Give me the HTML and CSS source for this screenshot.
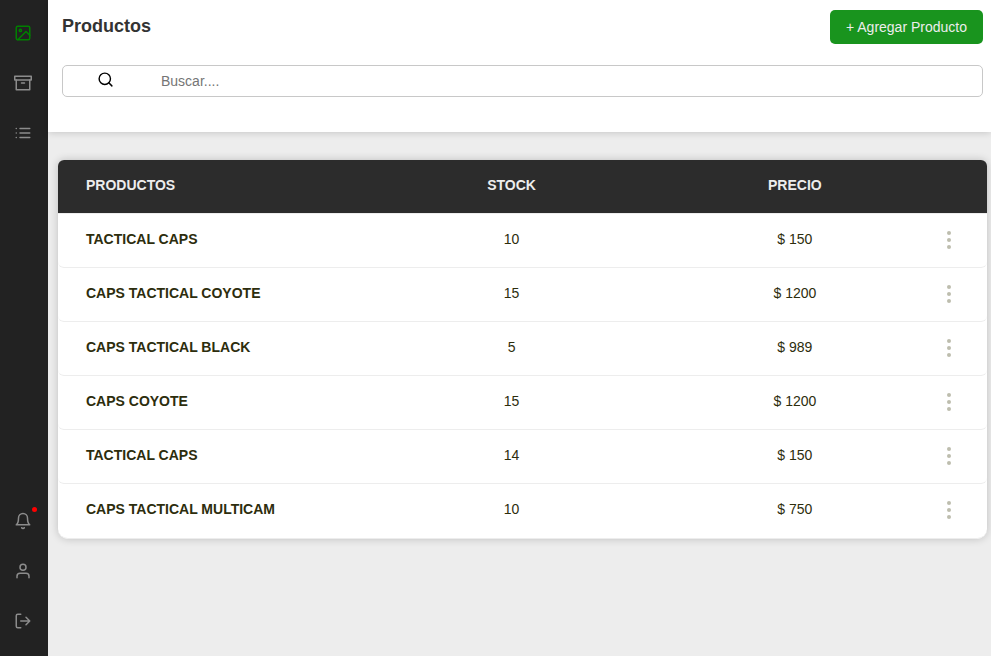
FILE: index.html
```html
<!DOCTYPE html>
<html lang="es">
<head>
<meta charset="utf-8">
<meta name="viewport" content="width=device-width, initial-scale=1">
<title>Productos</title>
<link rel="stylesheet" href="styles.css">
</head>
<body>
<div class="app">
  <nav class="sidebar" aria-label="Principal">
    <div class="nav-group">
      <a class="nav-link active" href="#productos" aria-label="Productos">
        <svg class="icon" viewBox="0 0 24 24"><rect x="3" y="3" width="18" height="18" rx="2"/><circle cx="8.5" cy="8.5" r="1.5"/><path d="M21 15l-5-5L5 21"/></svg>
      </a>
      <a class="nav-link" href="#archivo" aria-label="Archivo">
        <svg class="icon" viewBox="0 0 24 24"><path d="M21 8v13H3V8"/><rect x="1" y="3" width="22" height="5"/><path d="M10 12h4"/></svg>
      </a>
      <a class="nav-link" href="#lista" aria-label="Lista">
        <svg class="icon" viewBox="0 0 24 24"><path d="M8 6h13M8 12h13M8 18h13M3 6h.01M3 12h.01M3 18h.01"/></svg>
      </a>
    </div>
    <div class="nav-group">
      <a class="nav-link" href="#avisos" aria-label="Notificaciones">
        <svg class="icon" viewBox="0 0 24 24"><path d="M18 8A6 6 0 0 0 6 8c0 7-3 9-3 9h18s-3-2-3-9"/><path d="M13.73 21a2 2 0 0 1-3.46 0"/></svg>
        <span class="badge"></span>
      </a>
      <a class="nav-link" href="#perfil" aria-label="Perfil">
        <svg class="icon" viewBox="0 0 24 24"><path d="M20 21v-2a4 4 0 0 0-4-4H8a4 4 0 0 0-4 4v2"/><circle cx="12" cy="7" r="4"/></svg>
      </a>
      <a class="nav-link" href="#salir" aria-label="Salir">
        <svg class="icon" viewBox="0 0 24 24"><path d="M9 21H5a2 2 0 0 1-2-2V5a2 2 0 0 1 2-2h4"/><path d="M16 17l5-5-5-5M21 12H9"/></svg>
      </a>
    </div>
  </nav>
  <div class="content">
    <header class="header">
      <div class="title-row">
        <h1 class="title">Productos</h1>
        <button class="add-button" type="button">+ Agregar Producto</button>
      </div>
      <div class="search">
        <label class="search-label" for="buscar" aria-label="Buscar">
          <svg class="search-icon" viewBox="0 0 24 24"><circle cx="11" cy="11" r="8"/><path d="M21 21l-4.35-4.35"/></svg>
        </label>
        <input class="search-input" id="buscar" type="text" placeholder="Buscar....">
      </div>
    </header>
    <main class="main">
      <table class="products">
        <thead>
          <tr><th class="name" scope="col">PRODUCTOS</th><th class="stock" scope="col">STOCK</th><th class="price" scope="col">PRECIO</th><td class="actions"></td></tr>
        </thead>
        <tbody>
          <tr><th class="name" scope="row">TACTICAL CAPS</th><td>10</td><td>$ 150</td><td><button class="more" type="button" aria-label="Opciones"><svg class="dots" viewBox="0 0 6 20"><circle cx="3" cy="3" r="2"/><circle cx="3" cy="10" r="2"/><circle cx="3" cy="17" r="2"/></svg></button></td></tr>
          <tr><th class="name" scope="row">CAPS TACTICAL COYOTE</th><td>15</td><td>$ 1200</td><td><button class="more" type="button" aria-label="Opciones"><svg class="dots" viewBox="0 0 6 20"><circle cx="3" cy="3" r="2"/><circle cx="3" cy="10" r="2"/><circle cx="3" cy="17" r="2"/></svg></button></td></tr>
          <tr><th class="name" scope="row">CAPS TACTICAL BLACK</th><td>5</td><td>$ 989</td><td><button class="more" type="button" aria-label="Opciones"><svg class="dots" viewBox="0 0 6 20"><circle cx="3" cy="3" r="2"/><circle cx="3" cy="10" r="2"/><circle cx="3" cy="17" r="2"/></svg></button></td></tr>
          <tr><th class="name" scope="row">CAPS COYOTE</th><td>15</td><td>$ 1200</td><td><button class="more" type="button" aria-label="Opciones"><svg class="dots" viewBox="0 0 6 20"><circle cx="3" cy="3" r="2"/><circle cx="3" cy="10" r="2"/><circle cx="3" cy="17" r="2"/></svg></button></td></tr>
          <tr><th class="name" scope="row">TACTICAL CAPS</th><td>14</td><td>$ 150</td><td><button class="more" type="button" aria-label="Opciones"><svg class="dots" viewBox="0 0 6 20"><circle cx="3" cy="3" r="2"/><circle cx="3" cy="10" r="2"/><circle cx="3" cy="17" r="2"/></svg></button></td></tr>
          <tr><th class="name" scope="row">CAPS TACTICAL MULTICAM</th><td>10</td><td>$ 750</td><td><button class="more" type="button" aria-label="Opciones"><svg class="dots" viewBox="0 0 6 20"><circle cx="3" cy="3" r="2"/><circle cx="3" cy="10" r="2"/><circle cx="3" cy="17" r="2"/></svg></button></td></tr>
        </tbody>
      </table>
    </main>
  </div>
</div>
</body>
</html>
```
FILE: styles.css
```css
* {
  box-sizing: border-box;
}

body {
  margin: 0;
  background: #ededed;
  color: #2d2d0d;
  font-family: "Liberation Sans", Arial, sans-serif;
  font-size: 14px;
}

.app {
  display: flex;
  min-height: 100vh;
}

.sidebar {
  display: flex;
  flex-direction: column;
  justify-content: space-between;
  flex: none;
  width: 48px;
  padding: 8px 2px 10px 0;
  background: #222;
}

.nav-link {
  position: relative;
  display: flex;
  align-items: center;
  justify-content: center;
  height: 50px;
  color: #8c8c8c;
}

.nav-link.active {
  color: #008000;
}

.icon {
  width: 18px;
  height: 18px;
  fill: none;
  stroke: currentColor;
  stroke-width: 2;
  stroke-linecap: round;
  stroke-linejoin: round;
}

.badge {
  position: absolute;
  top: 11px;
  right: 9px;
  width: 5px;
  height: 5px;
  border-radius: 50%;
  background: #f00;
}

.content {
  flex: 1;
  min-width: 0;
}

.header {
  padding: 10px 8px 35px 14px;
  background: #fff;
  box-shadow: 0 0 8px rgba(0, 0, 0, 0.2);
}

.title-row {
  display: flex;
  justify-content: space-between;
  align-items: flex-start;
}

.title {
  margin: 0;
  color: #333;
  font-size: 18px;
  line-height: 32px;
}

.add-button {
  height: 34px;
  padding: 0 16px;
  border: 0;
  border-radius: 5px;
  background: #19941e;
  color: #ededed;
  font: inherit;
}

.search {
  display: flex;
  height: 32px;
  margin-top: 21px;
  border: 1px solid #c8c8c8;
  border-radius: 5px;
}

.search-label {
  display: flex;
  justify-content: center;
  flex: none;
  width: 84px;
  padding-top: 5px;
}

.search-icon {
  width: 17px;
  height: 17px;
  fill: none;
  stroke: #000;
  stroke-width: 2;
  stroke-linecap: round;
}

.search-input {
  flex: 1;
  min-width: 0;
  padding: 0 14px;
  border: 0;
  outline: 0;
  background: transparent;
  font: inherit;
}

.search-input::placeholder {
  color: #757575;
}

.main {
  padding: 28px 4px 28px 10px;
}

.products {
  width: 100%;
  table-layout: fixed;
  border-collapse: separate;
  border-spacing: 0;
  border-radius: 6px 6px 10px 10px;
  background: #fff;
  box-shadow: 0 0 8px rgba(0, 0, 0, 0.2);
  text-align: center;
}

.products th,
.products td {
  height: 54px;
  padding: 0 0 4px;
  border-bottom: 1px solid #ededed;
}

.products td:last-child {
  padding-bottom: 2px;
}

.products thead th,
.products thead td {
  background: #2c2c2c;
  background-clip: padding-box;
  color: #ededed;
}

.products thead th:first-child {
  border-top-left-radius: 6px;
}

.products thead td:last-child {
  border-top-right-radius: 6px;
}

.products tbody tr > :first-child {
  border-bottom-left-radius: 6px;
}

.products tbody tr > :last-child {
  border-bottom-right-radius: 6px;
}

.products tbody tr:last-child > * {
  height: 55px;
}

.products tbody tr:last-child > :first-child {
  border-bottom-left-radius: 10px;
}

.products tbody tr:last-child > :last-child {
  border-bottom-right-radius: 10px;
}

.products .name {
  padding-left: 28px;
  text-align: left;
}

.stock {
  width: 36%;
}

.price {
  width: 25%;
}

.actions {
  width: 76px;
}

.more {
  display: block;
  margin: 0 auto;
  padding: 0;
  border: 0;
  background: none;
}

.dots {
  display: block;
  width: 6px;
  height: 20px;
  fill: #bdbdae;
}
```
